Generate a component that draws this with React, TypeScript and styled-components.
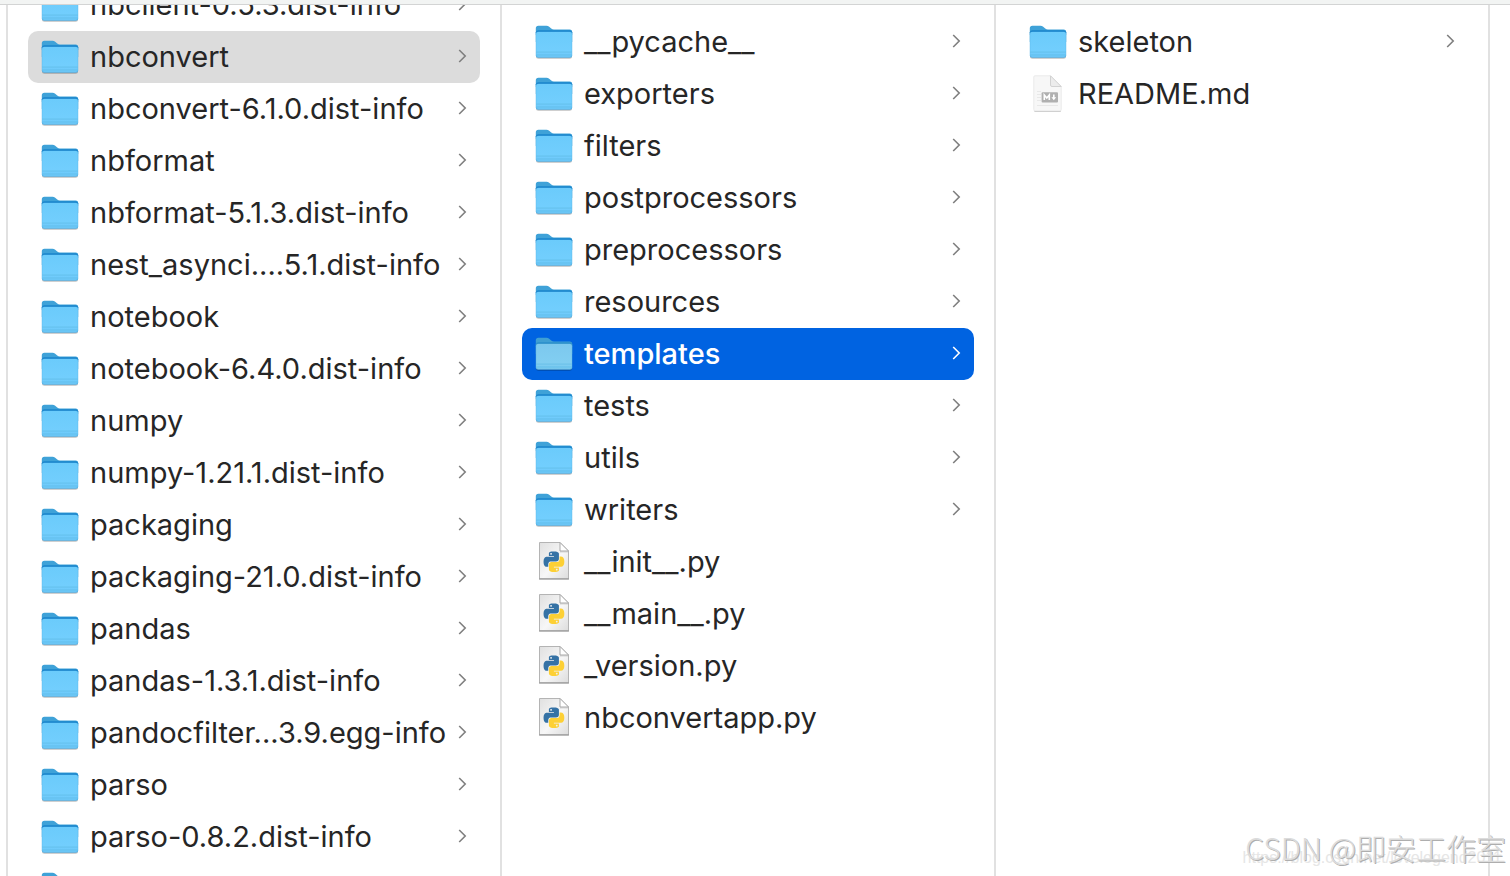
import React, { useId } from "react";
import styled, { createGlobalStyle, css } from "styled-components";

const GlobalStyle = createGlobalStyle`
  * { box-sizing: border-box; }
  body {
    margin: 0;
    background: #ffffff;
    color: #262626;
    font-family: Inter, "Noto Sans CJK SC", sans-serif;
  }
`;

const Window = styled.main`
  position: relative;
  display: flex;
  flex-direction: column;
  height: 100vh;
  overflow: hidden;
`;

const PathBar = styled.div`
  flex: none;
  height: 5px;
  background: #f2f4f3;
  border-bottom: 1px solid #d3d4d4;
`;

const Browser = styled.div`
  flex: 1;
  min-height: 0;
  display: grid;
  grid-template-columns: 8px repeat(3, minmax(0, 1fr)) 20px;
`;

const Column = styled.div`
  min-height: 0;
  overflow: hidden;
  border-right: 2px solid #e1e1e1;
`;

const List = styled.ul<{ $scrolled?: boolean }>`
  list-style: none;
  margin: ${(p) => (p.$scrolled ? "-26px" : "11px")} 0 0;
  padding: 0 20px;
`;

type Tone = "plain" | "path" | "active";

const rowTones = {
  plain: css``,
  path: css`
    background: #dcdcdc;
  `,
  active: css`
    background: #0063e1;
    color: #ffffff;
    font-weight: 500;
  `,
};

const Row = styled.button<{ $tone: Tone }>`
  display: flex;
  align-items: center;
  gap: 11px;
  width: 100%;
  height: 52px;
  padding: 0 12px;
  border: 0;
  border-radius: 10px;
  background: transparent;
  color: inherit;
  font: inherit;
  font-size: 29px;
  line-height: 36px;
  text-align: left;
  ${(p) => rowTones[p.$tone]}
`;

const Name = styled.span`
  flex: 1;
  min-width: 0;
  white-space: nowrap;
`;

const Icon = styled.svg`
  flex: none;
  display: block;
`;

const Watermark = styled.div`
  position: absolute;
  right: 4px;
  bottom: 11px;
  font-family: "Noto Sans CJK SC", sans-serif;
  font-weight: 300;
  font-size: 30px;
  line-height: 36px;
  color: #dcdcdc;
  text-shadow: 1px 1px 0 #aeaeae;
  white-space: nowrap;
`;

const BlogUrl = styled.div`
  position: absolute;
  right: 8px;
  bottom: 8px;
  font-family: "Liberation Sans", sans-serif;
  font-size: 16px;
  line-height: 20px;
  color: #e6e6e6;
  white-space: nowrap;
`;

function FolderIcon({ dimmed }: { dimmed?: boolean }) {
  const id = useId();
  return (
    <Icon width="39" height="40" viewBox="0 0 39 40" aria-hidden="true">
      <defs>
        <linearGradient id={id} x1="0" y1="0" x2="0" y2="1">
          <stop offset="0" stopColor={dimmed ? "#7cc8ee" : "#6bcbfb"} />
          <stop offset="1" stopColor={dimmed ? "#83d0f2" : "#74cffe"} />
        </linearGradient>
      </defs>
      <rect x="2" y="10" width="36" height="26.8" rx="2.5" fill="#000" opacity="0.25" />
      <path
        d="M1.8 6.6Q1.8 3.8 4.4 3.8H12.5Q14 3.8 15.2 4.8L17.2 6.6Q18.4 7.6 20 7.6H35.6Q38.2 7.6 38.2 10.3V20H1.8Z"
        fill={dimmed ? "#3f9fd3" : "#3fa2d8"}
      />
      <path d="M1.8 12.5V10.3Q2.2 8.2 4.4 8.2H35.6Q37.8 8.2 38.2 10.3V12.5Z" fill={dimmed ? "#2b8fcb" : "#1a85cc"} />
      <rect x="1.8" y="9.8" width="36.4" height="26" rx="2.5" fill={dimmed ? "#62b3dc" : "#55b2e6"} />
      <rect x="2.2" y="10" width="35.6" height="24.8" rx="2" fill={`url(#${id})`} />
      <rect x="2.2" y="29.6" width="35.6" height="1" fill="#5fb9e6" opacity="0.7" />
      <rect x="2.2" y="31.8" width="35.6" height="2.4" fill="#5fbbe9" opacity="0.55" />
    </Icon>
  );
}

function PythonIcon() {
  const id = useId();
  return (
    <Icon width="39" height="40" viewBox="0 0 39 40" aria-hidden="true">
      <defs>
        <linearGradient id={id} x1="0" y1="0" x2="1" y2="1">
          <stop offset="0" stopColor="#e0e0e0" />
          <stop offset="0.55" stopColor="#f7f7f7" />
          <stop offset="1" stopColor="#dcdcdc" />
        </linearGradient>
      </defs>
      <path d="M5.5 0.5H26L34.5 9V36.8H5.5Z" fill={`url(#${id})`} stroke="#b4b4b4" strokeLinejoin="round" />
      <path d="M5 37H35" stroke="#8d8d8d" />
      <path d="M26 0.5V9H34.5Z" fill="#ffffff" stroke="#a9a9a9" strokeLinejoin="round" />
      <path d="M26 10H34" stroke="#000000" opacity="0.12" />
      <g transform="translate(9.6 9.4) scale(0.86)">
        <path
          fill="#3572a5"
          fillRule="evenodd"
          d="M14.25.18l.9.2.73.26.59.3.45.32.34.34.25.34.16.33.1.3.04.26.02.2-.01.13V8.5l-.05.63-.13.55-.21.46-.26.38-.3.31-.33.25-.35.19-.35.14-.33.1-.3.07-.26.04-.21.02H8.77l-.69.05-.59.14-.5.22-.41.27-.33.32-.27.35-.2.36-.15.37-.1.35-.07.32-.04.27-.02.21v3.06H3.17l-.21-.03-.28-.07-.32-.12-.35-.18-.36-.26-.36-.36-.35-.46-.32-.59-.28-.73-.21-.88-.14-1.05-.05-1.23.06-1.22.16-1.04.24-.87.32-.71.36-.57.4-.44.42-.33.42-.24.4-.16.36-.1.32-.05.24-.01h.16l.06.01h8.16v-.83H6.18l-.01-2.75-.02-.37.05-.34.11-.31.17-.28.25-.26.31-.23.38-.2.44-.18.51-.15.58-.12.64-.1.71-.06.77-.04.84-.02 1.27.05zM7.95 2.16l-.23.33-.08.41.08.41.23.34.33.22.41.09.41-.09.33-.22.23-.34.08-.41-.08-.41-.23-.33-.33-.22-.41-.09-.41.09z"
        />
        <path
          fill="#fdd035"
          fillRule="evenodd"
          d="M21.04 6.11l.28.06.32.12.35.18.36.27.36.35.35.47.32.59.28.73.21.88.14 1.04.05 1.23-.06 1.23-.16 1.04-.24.86-.32.71-.36.57-.4.45-.42.33-.42.24-.4.16-.36.09-.32.05-.24.02-.16-.01h-8.22v.82h5.84l.01 2.76.02.36-.05.34-.11.31-.17.29-.25.25-.31.24-.38.2-.44.17-.51.15-.58.13-.64.09-.71.07-.77.04-.84.01-1.27-.04-1.07-.14-.9-.2-.73-.25-.59-.3-.45-.33-.34-.34-.25-.34-.16-.33-.1-.3-.04-.25-.02-.2.01-.13v-5.34l.05-.64.13-.54.21-.46.26-.38.3-.32.33-.24.35-.2.35-.14.33-.1.3-.06.26-.04.21-.02.13-.01h5.84l.69-.05.59-.14.5-.21.41-.28.33-.32.27-.35.2-.36.15-.36.1-.35.07-.32.04-.28.02-.21V6.07h2.09l.14.01zM14.57 20.36l-.23.33-.08.41.08.41.23.33.33.23.41.08.41-.08.33-.23.23-.33.08-.41-.08-.41-.23-.33-.33-.23-.41-.08-.41.08z"
        />
      </g>
    </Icon>
  );
}

function MarkdownIcon() {
  return (
    <Icon width="39" height="40" viewBox="0 0 39 40" aria-hidden="true">
      <path
        d="M7 1.8H22.5L33.2 12.5V35.5Q33.2 37.2 31.5 37.2H7.5Q5.8 37.2 5.8 35.5V3Q5.8 1.8 7 1.8Z"
        fill="#f7f7f7"
        stroke="#eaeaea"
      />
      <path d="M6.4 37.4H32.8" stroke="#cccccc" />
      <path d="M22.5 1.8L33.2 12.5H24Q22.5 12.5 22.5 11Z" fill="#ececec" stroke="#d2d2d2" strokeLinejoin="round" />
      <path d="M9 17.5H13M9 20.5H13M9 23.5H13M9 26.5H13M9 31.5H30" stroke="#e8e8e8" />
      <rect x="13.6" y="18.2" width="16.4" height="10.2" rx="1" fill="#b0b0b0" />
      <path d="M16.3 26V21L18.8 24L21.3 21V26" fill="none" stroke="#ffffff" strokeWidth="1.6" />
      <path d="M25.8 20.4V24.2" stroke="#ffffff" strokeWidth="1.6" />
      <path d="M23.4 23.2H28.2L25.8 26.2Z" fill="#ffffff" />
    </Icon>
  );
}

function Chevron({ bright }: { bright?: boolean }) {
  return (
    <Icon width="12" height="16" viewBox="0 0 12 16" aria-hidden="true">
      <path
        d="M3.2 1L9.2 7L3.2 13"
        fill="none"
        stroke={bright ? "#ffffff" : "#7f7f7f"}
        strokeWidth="1.6"
      />
    </Icon>
  );
}

type Kind = "folder" | "python" | "markdown";

interface Entry {
  name: string;
  kind?: Kind;
  tone?: Tone;
}

const packages: Entry[] = [
  { name: "nbclient-0.5.3.dist-info" },
  { name: "nbconvert", tone: "path" },
  { name: "nbconvert-6.1.0.dist-info" },
  { name: "nbformat" },
  { name: "nbformat-5.1.3.dist-info" },
  { name: "nest_asynci....5.1.dist-info" },
  { name: "notebook" },
  { name: "notebook-6.4.0.dist-info" },
  { name: "numpy" },
  { name: "numpy-1.21.1.dist-info" },
  { name: "packaging" },
  { name: "packaging-21.0.dist-info" },
  { name: "pandas" },
  { name: "pandas-1.3.1.dist-info" },
  { name: "pandocfilter...3.9.egg-info" },
  { name: "parso" },
  { name: "parso-0.8.2.dist-info" },
  { name: "" },
];

const nbconvert: Entry[] = [
  { name: "__pycache__" },
  { name: "exporters" },
  { name: "filters" },
  { name: "postprocessors" },
  { name: "preprocessors" },
  { name: "resources" },
  { name: "templates", tone: "active" },
  { name: "tests" },
  { name: "utils" },
  { name: "writers" },
  { name: "__init__.py", kind: "python" },
  { name: "__main__.py", kind: "python" },
  { name: "_version.py", kind: "python" },
  { name: "nbconvertapp.py", kind: "python" },
];

const templates: Entry[] = [{ name: "skeleton" }, { name: "README.md", kind: "markdown" }];

function EntryRow({ name, kind = "folder", tone = "plain" }: Entry) {
  const active = tone === "active";
  return (
    <li>
      <Row type="button" $tone={tone}>
        {kind === "folder" && <FolderIcon dimmed={active} />}
        {kind === "python" && <PythonIcon />}
        {kind === "markdown" && <MarkdownIcon />}
        <Name>{name}</Name>
        {kind === "folder" && <Chevron bright={active} />}
      </Row>
    </li>
  );
}

function FileColumn({ entries, scrolled }: { entries: Entry[]; scrolled?: boolean }) {
  return (
    <Column>
      <List $scrolled={scrolled}>
        {entries.map((entry) => (
          <EntryRow key={entry.name} {...entry} />
        ))}
      </List>
    </Column>
  );
}

export default function App() {
  return (
    <>
      <GlobalStyle />
      <Window>
        <PathBar />
        <Browser>
          <Column />
          <FileColumn entries={packages} scrolled />
          <FileColumn entries={nbconvert} />
          <FileColumn entries={templates} />
        </Browser>
        <BlogUrl>https://blog.csdn.net/lovelegend2011</BlogUrl>
        <Watermark>CSDN @即安工作室</Watermark>
      </Window>
    </>
  );
}
